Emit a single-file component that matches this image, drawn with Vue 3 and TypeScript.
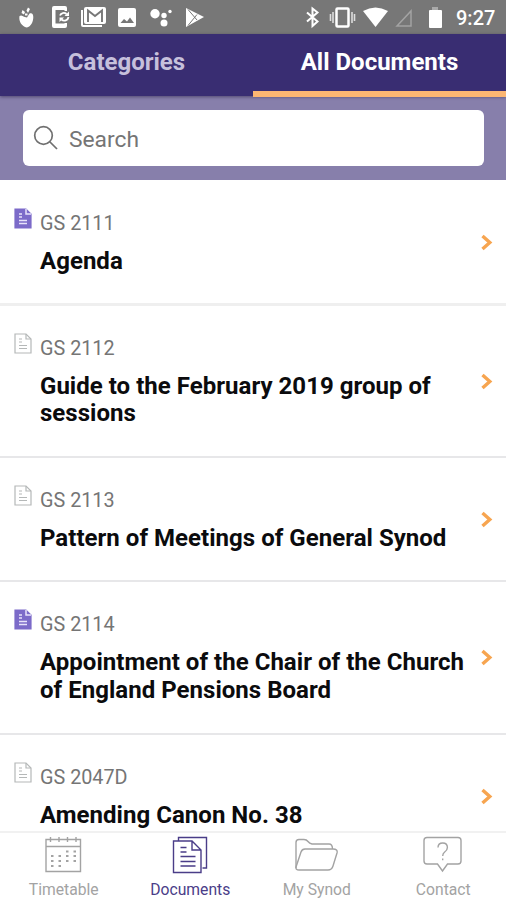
<script setup lang="ts">
interface DocumentItem {
  code: string
  title: string
  saved: boolean
}

const documents: DocumentItem[] = [
  { code: 'GS 2111', title: 'Agenda', saved: true },
  { code: 'GS 2112', title: 'Guide to the February 2019 group of sessions', saved: false },
  { code: 'GS 2113', title: 'Pattern of Meetings of General Synod', saved: false },
  { code: 'GS 2114', title: 'Appointment of the Chair of the Church of England Pensions Board', saved: true },
  { code: 'GS 2047D', title: 'Amending Canon No. 38', saved: false },
]

const navItems = ['Timetable', 'Documents', 'My Synod', 'Contact']
const activeNav = 'Documents'
</script>

<template>
  <div class="app">
    <header class="status">
      <svg class="status-left" viewBox="0 0 220 34" fill="#fff">
        <path d="M19.500 16c1.500-1.200 3-.5 4.500.8l3 .7 2.500-4c2.500-1 3.800.5 3.800 3.500 0 5-2.300 9.500-6.500 10.500-5-1-8.300-6-7.300-11.500z" />
        <path d="M22.500 10l2.500 2-1 2.500-2.500-1.500zM26.500 10.500l1.500-3 2 1.500-2 4zM25 13.500h2.500v2H25z" />
        <path fill-rule="evenodd" d="M54 6h11q2 0 2 2v3h-2.500v-1H55.500v13.500h9V23h2.500v3q0 2-2 2H54q-2 0-2-2V8q0-2 2-2z" />
        <path d="M60 15.500a4 4 0 0 1 6.500-1.500M68.500 17a4.200 4.200 0 0 1-7 2.500" fill="none" stroke="#fff" stroke-width="1.800" />
        <path d="M69 11.500v4.500h-4.500zM59.500 22v-4.500H64z" />
        <path d="M81 10h2v15h19v2H83q-2 0-2-2z" />
        <rect x="84" y="7" width="22" height="17" rx="2" />
        <path d="M88 22V10.500l7 5.500 7-5.500V22" fill="none" stroke="#777" stroke-width="1.900" />
        <rect x="118" y="8" width="18" height="19" rx="2" />
        <path d="M120.500 23l3.500-4 3 2.500 3-4 4 5.500z" fill="#777" />
        <circle cx="155" cy="13.700" r="4.700" /><circle cx="164" cy="15.500" r="2.700" />
        <circle cx="164" cy="23" r="3.500" /><circle cx="170" cy="11.500" r="1.700" />
        <path d="M186 8l18 9-18 10z" />
        <path d="M188 9.500l9 10.500M188 25.500l9-11" fill="none" stroke="#777" stroke-width="1" />
      </svg>
      <svg class="status-right" viewBox="0 0 150 34" fill="#fff">
        <path d="M7 12.500l10.500 9-5 4.500V8.500l5 4-10.500 9" fill="none" stroke="#fff" stroke-width="2" />
        <rect x="36.500" y="8.500" width="12" height="18" rx="1" fill="none" stroke="#fff" stroke-width="2.500" />
        <path d="M33 12v11M30.500 14v7M52 12v11M54.500 14v7" stroke="#ddd" stroke-width="1.600" />
        <path d="M63 11q12.500-7 25 0L75.500 27z" />
        <path d="M111 11v15H97z" fill="none" stroke="#a3a3a3" stroke-width="1.500" />
        <path d="M132 7h6v3h-6z" fill="#aaa" /><rect x="129" y="10" width="13" height="18" rx="1" />
      </svg>
      <span class="clock">9:27</span>
    </header>
    <div class="tabs">
      <div class="tab">Categories</div>
      <div class="tab selected">All Documents</div>
    </div>
    <div class="search-band">
      <div class="search">
        <svg width="26" height="26" viewBox="0 0 26 26" fill="none" stroke="#707070" stroke-width="1.700">
          <circle cx="10.500" cy="10.500" r="8.800" /><path d="M17 17l7 7" />
        </svg>
        <span>Search</span>
      </div>
    </div>
    <main class="list">
      <article v-for="doc in documents" :key="doc.code" class="row">
        <svg class="doc-icon" :class="{ saved: doc.saved }" viewBox="0 0 18 21">
          <path class="sheet" d="M1 1h11l5 5v14H1z" />
          <path class="fold" d="M12 1v5h5" />
          <path class="lines" d="M5 6h3M5 9h3M5 12.500h8M5 15.500h8" />
        </svg>
        <div class="text">
          <div class="code">{{ doc.code }}</div>
          <div class="title">{{ doc.title }}</div>
        </div>
        <svg class="chevron" viewBox="0 0 12 18"><path d="M1.500 2L8.800 8.500l-7.300 6.500" /></svg>
      </article>
    </main>
    <nav class="nav">
      <div v-for="item in navItems" :key="item" class="nav-item" :class="{ active: item === activeNav }">
        <svg v-if="item === 'Timetable'" viewBox="0 0 42 38">
          <path d="M4 3.500h34.500v32H4zM4 10.500h34.500" />
          <path d="M8.500 1v5M17 1v5M25.500 1v5M34 1v5" />
          <path class="dots" d="M24 15.500h2.500M31.500 15.500h2.500M9 20h2.500M16.500 20h2.500M24 20h2.500M31.500 20h2.500M9 25h2.500M16.500 25h2.500M24 25h2.500M31.500 25h2.500M9 30h2.500M16.500 30h2.500" />
        </svg>
        <svg v-else-if="item === 'Documents'" viewBox="0 0 42 38">
          <path d="M9.500 5V1.500h28V32h-4" />
          <path d="M4.500 5h18.500l9 9v22.500H4.500zM23 5v9h9" />
          <path d="M11.500 11.500h6M11.500 16h6M11.500 20.500h15M11.500 25.500h15M11.500 30h15" />
        </svg>
        <svg v-else-if="item === 'My Synod'" class="wide" viewBox="0 0 44 38">
          <path d="M2 32V6.500q0-3 3-3h5q2.500 0 4 2T18 8h17q3.500 0 3.500 5" />
          <path d="M2 31l5-15q1-3 4-3h28q5 0 4 4l-4 13q-1.200 4-5 4H5Q1.500 34 2 31z" />
        </svg>
        <svg v-else viewBox="0 0 42 38">
          <path d="M5 1.500h31q3 0 3 3V25q0 3-3 3H25.500l-5 7-5-7H5q-3 0-3-3V4.500q0-3 3-3z" />
          <path d="M16 11.500q0-4.500 4.700-4.500t4.700 4.500q0 2.500-2.700 4.500-2 1.500-2 4M20.700 22.500v1.800" />
        </svg>
        <span>{{ item }}</span>
      </div>
    </nav>
  </div>
</template>

<style>
body { margin: 0; overflow: hidden; }
</style>

<style scoped>
.app {
  width: 506px;
  height: 900px;
  display: flex;
  flex-direction: column;
  background: #fff;
  font-family: Roboto, "Liberation Sans", sans-serif;
  overflow: hidden;
}
.status {
  height: 34px;
  flex: none;
  background: #777;
  display: flex;
  align-items: center;
}
.status-left { width: 220px; height: 34px; }
.status-right { width: 150px; height: 34px; margin-left: 80px; margin-right: 6px; }
.clock { color: #fff; font-size: 20px; line-height: 34px; font-weight: 500; padding-top: 2px; white-space: nowrap; }
.tabs {
  height: 62px;
  flex: none;
  display: grid;
  grid-template-columns: 1fr 1fr;
  background: #392d72;
  box-shadow: 0 1px 3px rgba(40, 30, 70, .55);
  z-index: 1;
}
.tab {
  box-sizing: border-box;
  text-align: center;
  font-size: 24px;
  line-height: 57px;
  font-weight: 700;
  color: #c6c0dc;
}
.selected { color: #fff; border-bottom: 6px solid #fcb672; }
.search-band {
  box-sizing: border-box;
  height: 84px;
  flex: none;
  background: #877fab;
  padding: 14px 22px 14px 23px;
}
.search {
  height: 56px;
  box-sizing: border-box;
  background: #fff;
  border-radius: 6px;
  display: flex;
  align-items: center;
  padding-left: 10px;
  gap: 10px;
  font-size: 22.8px;
  color: #757575;
}
.search span { padding-top: 2px; }
.list { flex: 1; min-height: 0; overflow: hidden; }
.row {
  box-sizing: border-box;
  display: flex;
  align-items: center;
  padding: 30px 13px 28px 14px;
  border-bottom: 2px solid #e7e7e9;
}
.row:first-child { padding-top: 31px; padding-bottom: 27px; border-bottom: 3px solid #efefef; }
.doc-icon {
  width: 18px;
  height: 21px;
  flex: none;
  align-self: flex-start;
  margin-top: -3px;
  fill: none;
  stroke: #b5b8b8;
  stroke-width: 1.2;
}
.saved .sheet { fill: #7c6bc9; stroke: #7c6bc9; }
.saved .fold, .saved .lines { stroke: #e8e3fa; stroke-width: 1.5; }
.text { flex: 1; margin-left: 8px; }
.code { font-size: 19.8px; line-height: 25px; color: #757575; }
.title {
  margin-top: 12px;
  font-size: 24px;
  line-height: 27.6px;
  letter-spacing: .03px;
  font-weight: 700;
  color: #0b0b0d;
}
.chevron { width: 12px; height: 18px; flex: none; fill: none; stroke: #f7a550; stroke-width: 3.4; }
.nav {
  height: 69px;
  flex: none;
  box-sizing: border-box;
  display: grid;
  grid-template-columns: repeat(4, 1fr);
  border-top: 2px solid #f1f1f1;
  background: #fff;
}
.nav-item {
  display: flex;
  flex-direction: column;
  align-items: center;
  padding-top: 3px;
  color: #a3a3a3;
  font-size: 15.7px;
}
.nav-item svg { width: 42px; height: 38px; fill: none; stroke: currentColor; stroke-width: 1.4; }
.nav-item .wide { width: 44px; }
.nav-item .dots { stroke-width: 2; }
.nav-item span { line-height: 20px; margin-top: 6px; padding-left: 1px; }
.active { color: #4a3d88; }
</style>
